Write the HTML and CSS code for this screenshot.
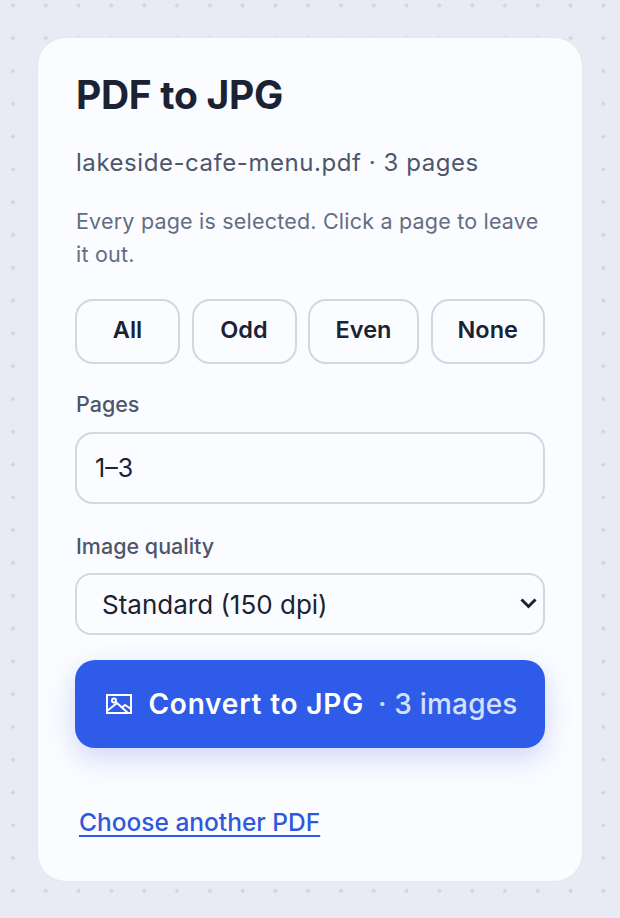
FILE: index.html
```html
<!DOCTYPE html>
<html lang="en">
<head>
  <meta charset="UTF-8">
  <meta name="viewport" content="width=device-width, initial-scale=1.0">
  <title>PDF to JPG</title>
  <link rel="stylesheet" href="styles.css">
</head>
<body>
  <main class="card">
    <h1>PDF to JPG</h1>
    <p class="file-name">lakeside-cafe-menu.pdf · 3 pages</p>
    <p class="hint">Every page is selected. Click a page to leave it out.</p>

    <!-- Quick page selection -->
    <div class="quick-select">
      <button class="pick pick-all">All</button>
      <button class="pick pick-odd">Odd</button>
      <button class="pick pick-even">Even</button>
      <button class="pick pick-none">None</button>
    </div>

    <label class="field-label" for="pages">Pages</label>
    <input class="pages-input" id="pages" type="text" value="1–3">

    <label class="field-label quality-label" for="quality">Image quality</label>
    <div class="select-wrap">
      <select class="quality-select" id="quality">
        <option>Standard (150 dpi)</option>
        <option>High (300 dpi)</option>
      </select>
      <svg class="select-arrow" viewBox="0 0 17 11" fill="none" stroke="currentColor" stroke-width="3">
        <path d="M1.5 1.5 L8.5 8.5 L15.5 1.5"/>
      </svg>
    </div>

    <button class="convert">
      <svg class="convert-icon" viewBox="0 0 26 20" fill="none" stroke="currentColor" stroke-width="2">
        <rect x="1" y="1" width="24" height="18"/>
        <circle cx="8" cy="6.5" r="2"/>
        <path d="M1 17 L11 9 L22 19 M16 13.5 L19 11 L25 15"/>
      </svg>
      <span class="convert-text">Convert to JPG</span>
      <span class="convert-count">· 3 images</span>
    </button>

    <a class="another" href="#">Choose another PDF</a>
  </main>
</body>
</html>
```

FILE: styles.css
```css
/* General Styles */
body {
  margin: 0;
  min-height: 918px;
  box-sizing: border-box;
  padding: 37px 37px 36px;
  font-family: 'Inter', 'Noto Sans', sans-serif;
  color: #1a2233;
  background-color: #e8ebf3;
  background-image: radial-gradient(circle, #d2d5df 1.7px, transparent 2.3px);
  background-size: 32.8px 32.8px;
  background-position: -3.4px -11px;
}

.card {
  box-sizing: border-box;
  height: 845px;
  padding: 0 37px;
  background: #fbfcff;
  border: 1px solid #e4e7ee;
  border-radius: 29px;
  display: flex;
  flex-direction: column;
}

h1 {
  margin: 33px 0 0;
  padding-left: 1px;
  font-size: 39px;
  line-height: 48px;
  font-weight: 700;
  letter-spacing: -0.3px;
  color: #1a2233;
}

.file-name {
  margin: 29px 0 0;
  padding-left: 1px;
  font-size: 24px;
  line-height: 30px;
  letter-spacing: 0.55px;
  color: #4d566b;
}

.hint {
  margin: 27px 0 0;
  padding-left: 1px;
  font-size: 21.5px;
  line-height: 33px;
  letter-spacing: 0.2px;
  color: #646d83;
}

.quick-select {
  display: flex;
  gap: 11.5px;
  margin-top: 28px;
}

.pick {
  height: 65px;
  flex: 0 0 105px;
  padding: 0 0 4px;
  font: 600 23.5px 'Inter', 'Noto Sans', sans-serif;
  color: #1a2233;
  background: #fbfcff;
  border: 2px solid #d3d7e2;
  border-radius: 18px;
}

.pick-even { flex: 0 0 111px; }
.pick-none { flex: 1 1 114px; }

.field-label {
  margin-top: 25px;
  padding-left: 1px;
  font-size: 21.5px;
  line-height: 30px;
  font-weight: 500;
  color: #4d566b;
}

.quality-label { margin-top: 27px; }

.pages-input {
  box-sizing: border-box;
  width: 100%;
  height: 72px;
  margin-top: 13px;
  padding: 0 18px;
  font: 400 25px 'Inter', 'Noto Sans', sans-serif;
  color: #1a2233;
  background: #fbfcff;
  border: 2px solid #d3d7e2;
  border-radius: 18px;
  outline: none;
}

.select-wrap {
  position: relative;
  margin-top: 12px;
}

.quality-select {
  display: block;
  box-sizing: border-box;
  width: 100%;
  height: 62px;
  padding: 0 25px;
  appearance: none;
  font: 400 26px 'Inter', 'Noto Sans', sans-serif;
  color: #1a2233;
  background: #fbfcff;
  border: 2px solid #d3d7e2;
  border-radius: 16px;
}

.select-arrow {
  position: absolute;
  right: 8px;
  top: 25px;
  width: 17px;
  height: 11px;
  color: #1a2233;
}

.convert {
  display: flex;
  align-items: center;
  justify-content: center;
  width: 100%;
  height: 88px;
  margin-top: 25px;
  padding: 0 0 0 4px;
  font: 600 28px 'Inter', 'Noto Sans', sans-serif;
  color: #fff;
  background: #2e5ce8;
  border: none;
  border-radius: 20px;
  box-shadow: 0 10px 28px rgba(46, 92, 232, 0.22);
}

.convert-icon {
  width: 26px;
  height: 20px;
  margin-right: 16px;
}

.convert-text { letter-spacing: 0.8px; }

.convert-count {
  margin-left: 14px;
  font-weight: 500;
  letter-spacing: 0.2px;
  color: #d5e0ff;
}

.another {
  align-self: flex-start;
  margin: 58px 0 0 4px;
  font-size: 24.5px;
  line-height: 32px;
  font-weight: 500;
  color: #2f58dc;
  text-decoration: underline;
  text-decoration-thickness: 2px;
  text-underline-offset: 4px;
}
```
